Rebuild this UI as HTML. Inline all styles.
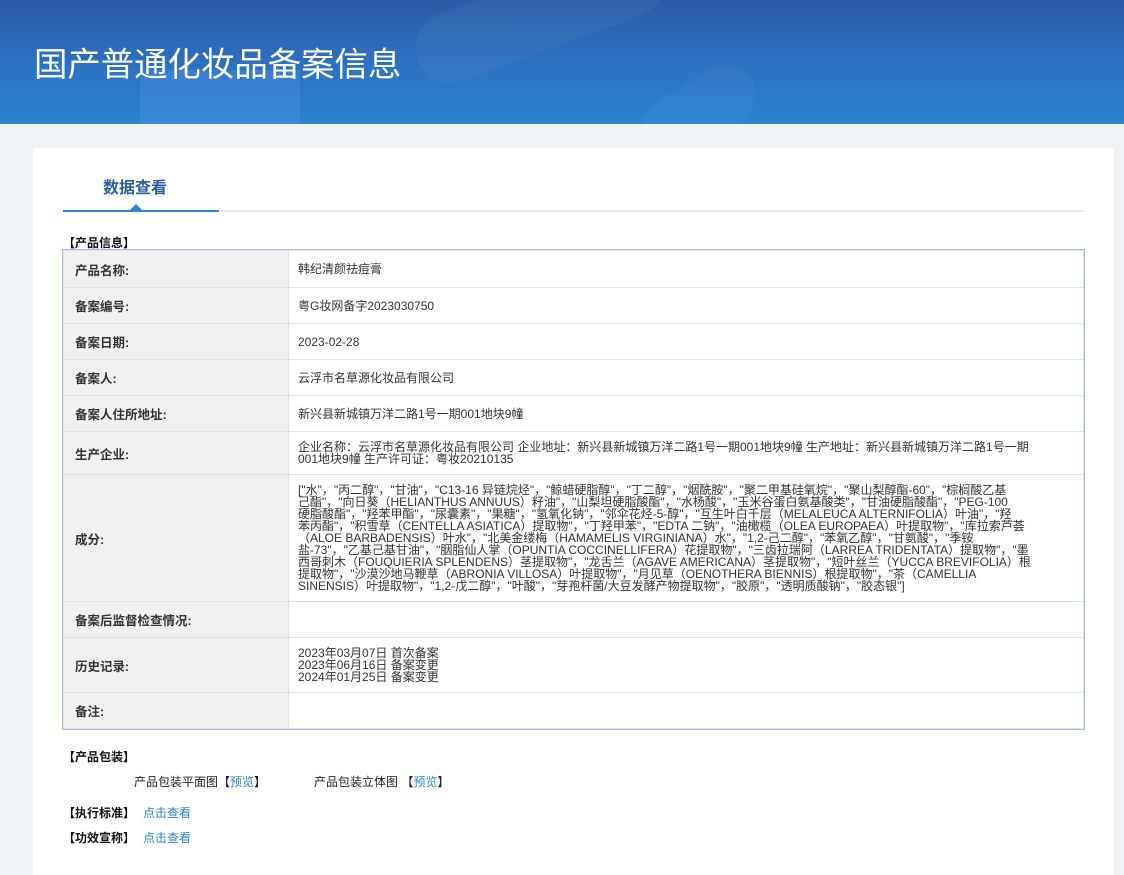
<!DOCTYPE html>
<html><head><meta charset="utf-8"><style>
*{margin:0;padding:0;box-sizing:border-box}
body{width:1124px;height:875px;overflow:hidden;background:#eff3f6;font-family:"Liberation Sans","Microsoft YaHei","Noto Sans CJK SC",sans-serif;color:#333}
.hd{position:absolute;left:0;top:0;width:1124px;height:124px;background:linear-gradient(180deg,#2c5aa7 0%,#2c74c4 60%,#2a85d1 100%);overflow:hidden}
.hd h1{position:absolute;left:34px;top:37px;font-size:33.4px;font-weight:normal;color:#fff;font-family:"Noto Sans CJK SC",sans-serif}
.card{position:absolute;left:33px;top:148px;width:1081px;height:727px;background:#fff}
.tab{position:absolute;left:70px;top:26px;font-size:16px;font-weight:bold;color:#2d5c9e}
.tline{position:absolute;left:30px;top:62px;width:1021px;height:2px;background:#e8e8e8}
.tact{position:absolute;left:30px;top:62px;width:156px;height:2px;background:#2a86d6}
.tri{position:absolute;left:97px;top:56px;width:0;height:0;border-left:6px solid transparent;border-right:6px solid transparent;border-bottom:6px solid #2a86d6}
.sec{position:absolute;font-size:12px;font-weight:bold;color:#111}
table{position:absolute;left:30px;top:102px;width:1021px;border-collapse:collapse;outline:1px solid #9dbfe6;font-size:12px}
td{border:1px solid #e2e2e2;vertical-align:middle}
td.l{width:225px;background:#f0f0f0;font-weight:bold;font-size:12.5px;padding-left:11px;color:#333}
td.v{padding-left:9px;line-height:12px;color:#333}
.nw{white-space:nowrap}
a{color:#2a86d6;text-decoration:none}
.t{position:absolute;font-size:12px;color:#222;white-space:nowrap}
</style></head><body>
<div class="hd">
<div style="position:absolute;left:140px;top:70px;width:160px;height:60px;background:rgba(90,150,230,.3)"></div>
<div style="position:absolute;left:410px;top:-20px;width:260px;height:70px;border-radius:35px;background:rgba(255,255,255,.04);transform:rotate(-20deg)"></div>
<div style="position:absolute;left:640px;top:80px;width:120px;height:60px;border-radius:30px;background:rgba(255,255,255,.03);transform:rotate(-30deg)"></div>
<h1>国产普通化妆品备案信息</h1>
</div>
<div class="card">
<div class="tab">数据查看</div>
<div class="tline"></div><div class="tact"></div><div class="tri"></div>
<div class="sec" style="left:30px;top:86px">【产品信息】</div>
<table>
<tr style="height:37px"><td class="l">产品名称:</td><td class="v">韩纪清颜祛痘膏</td></tr>
<tr style="height:36px"><td class="l">备案编号:</td><td class="v">粤G妆网备字2023030750</td></tr>
<tr style="height:36px"><td class="l">备案日期:</td><td class="v">2023-02-28</td></tr>
<tr style="height:36px"><td class="l">备案人:</td><td class="v">云浮市名草源化妆品有限公司</td></tr>
<tr style="height:36px"><td class="l">备案人住所地址:</td><td class="v">新兴县新城镇万洋二路1号一期001地块9幢</td></tr>
<tr style="height:43px"><td class="l">生产企业:</td><td class="v nw">企业名称：云浮市名草源化妆品有限公司 企业地址：新兴县新城镇万洋二路1号一期001地块9幢 生产地址：新兴县新城镇万洋二路1号一期<br>001地块9幢 生产许可证：粤妆20210135</td></tr>
<tr style="height:127px"><td class="l">成分:</td><td class="v nw">["水"，"丙二醇"，"甘油"，"C13-16 异链烷烃"，"鲸蜡硬脂醇"，"丁二醇"，"烟酰胺"，"聚二甲基硅氧烷"，"聚山梨醇酯-60"，"棕榈酸乙基<br>己酯"，"向日葵（HELIANTHUS ANNUUS）籽油"，"山梨坦硬脂酸酯"，"水杨酸"，"玉米谷蛋白氨基酸类"，"甘油硬脂酸酯"，"PEG-100<br>硬脂酸酯"，"羟苯甲酯"，"尿囊素"，"果糖"，"氢氧化钠"，"邻伞花烃-5-醇"，"互生叶白千层（MELALEUCA ALTERNIFOLIA）叶油"，"羟<br>苯丙酯"，"积雪草（CENTELLA ASIATICA）提取物"，"丁羟甲苯"，"EDTA 二钠"，"油橄榄（OLEA EUROPAEA）叶提取物"，"库拉索芦荟<br>（ALOE BARBADENSIS）叶水"，"北美金缕梅（HAMAMELIS VIRGINIANA）水"，"1,2-己二醇"，"苯氧乙醇"，"甘氨酸"，"季铵<br>盐-73"，"乙基己基甘油"，"胭脂仙人掌（OPUNTIA COCCINELLIFERA）花提取物"，"三齿拉瑞阿（LARREA TRIDENTATA）提取物"，"墨<br>西哥刺木（FOUQUIERIA SPLENDENS）茎提取物"，"龙舌兰（AGAVE AMERICANA）茎提取物"，"短叶丝兰（YUCCA BREVIFOLIA）根<br>提取物"，"沙漠沙地马鞭草（ABRONIA VILLOSA）叶提取物"，"月见草（OENOTHERA BIENNIS）根提取物"，"茶（CAMELLIA<br>SINENSIS）叶提取物"，"1,2-戊二醇"，"叶酸"，"芽孢杆菌/大豆发酵产物提取物"，"胶原"，"透明质酸钠"，"胶态银"]</td></tr>
<tr style="height:36px"><td class="l">备案后监督检查情况:</td><td class="v"></td></tr>
<tr style="height:55px"><td class="l">历史记录:</td><td class="v">2023年03月07日 首次备案<br>2023年06月16日 备案变更<br>2024年01月25日 备案变更</td></tr>
<tr style="height:36px"><td class="l">备注:</td><td class="v"></td></tr>
</table>
<div class="sec" style="left:30px;top:600px">【产品包装】</div>
<div class="t" style="left:101px;top:625px">产品包装平面图【<a>预览</a>】</div>
<div class="t" style="left:281px;top:625px">产品包装立体图 【<a>预览</a>】</div>
<div class="sec" style="left:30px;top:656px">【执行标准】</div><div class="t" style="left:110px;top:656px"><a>点击查看</a></div>
<div class="sec" style="left:30px;top:681px">【功效宣称】</div><div class="t" style="left:110px;top:681px"><a>点击查看</a></div>
</div>
</body></html>
